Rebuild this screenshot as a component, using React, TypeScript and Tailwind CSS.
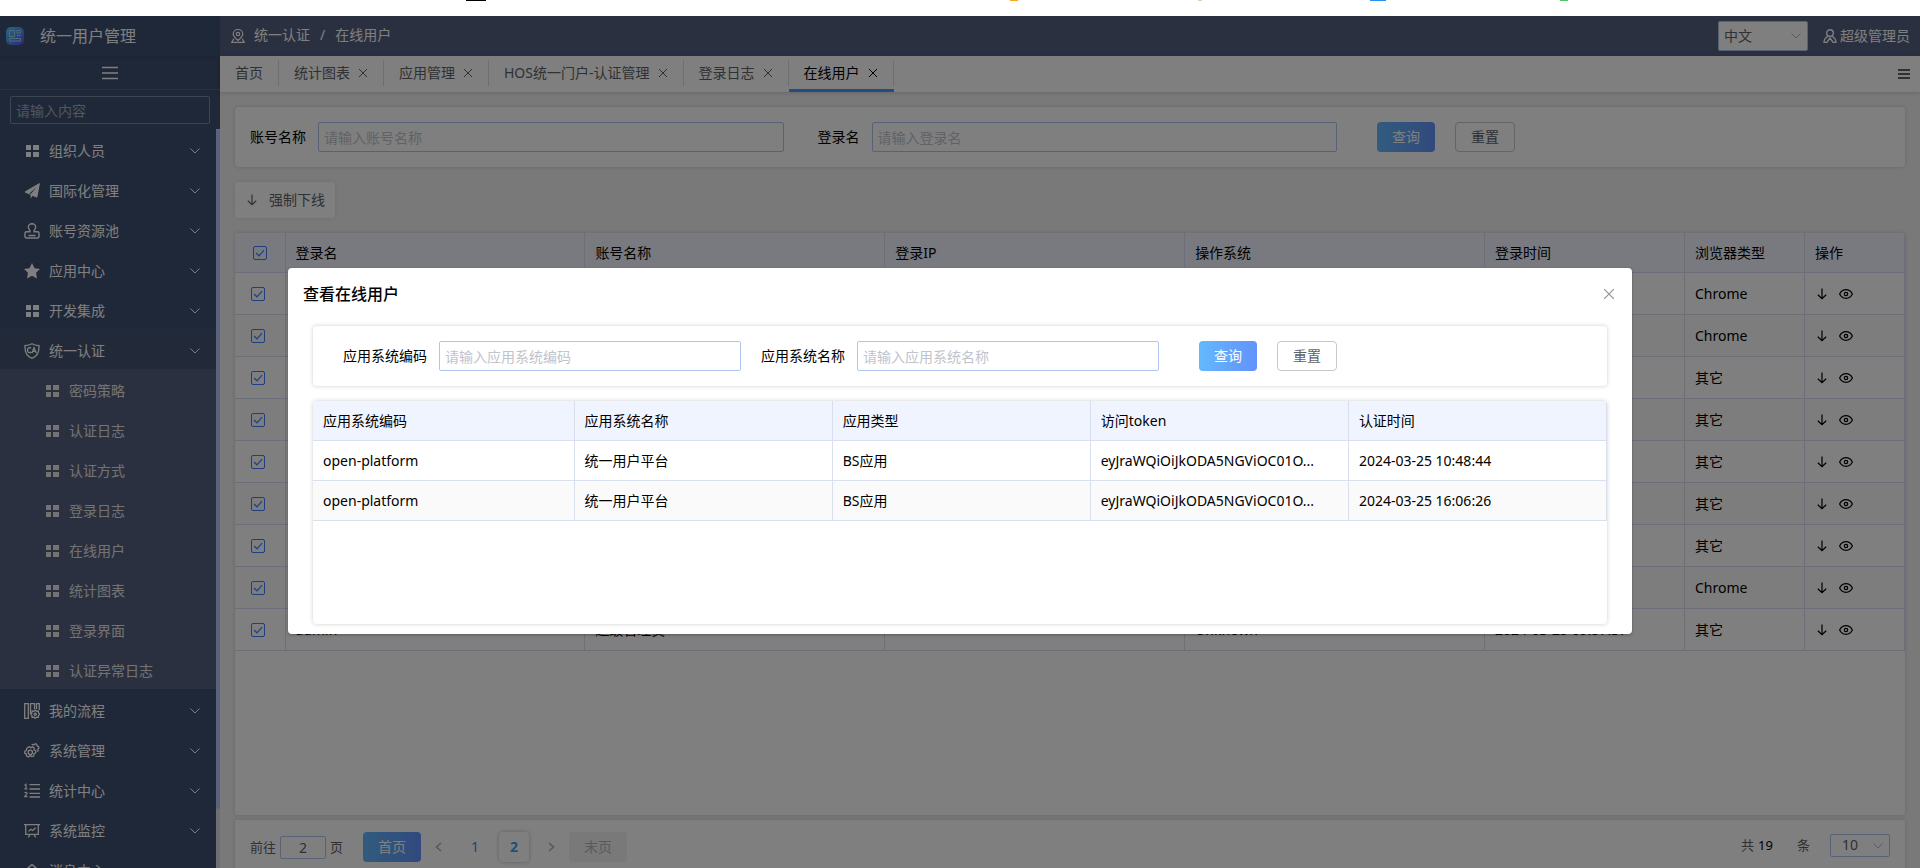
import { useState } from 'react';
import type { ReactNode } from 'react';

interface MenuItem {
  label: string;
  icon: ReactNode;
  children?: string[];
}

interface OnlineUser {
  login?: string;
  account?: string;
  ip?: string;
  os?: string;
  time: string;
  browser: string;
}

const GridIcon = () => (
  <svg width="16" height="16" viewBox="0 0 16 16" fill="currentColor" aria-hidden="true">
    <path d="M2 2h5v5H2zM9 2h6v5H9zM2 9h5v5H2zM9 9h6v5H9z" />
  </svg>
);

const PlaneIcon = () => (
  <svg width="16" height="16" viewBox="0 0 16 16" aria-hidden="true">
    <path d="M15.400.600 1 9l4.200 1.700L13 3.400 6.600 11.300v4.200l2.300-3 3.900 1.700z" fill="currentColor" />
    <path d="M1 9 15.400.600l-2.600 13.600-7.600-3.500z" fill="none" stroke="currentColor" strokeWidth="1" />
  </svg>
);

const StampIcon = () => (
  <svg width="16" height="16" viewBox="0 0 16 16" fill="none" stroke="currentColor" strokeWidth="1.4" aria-hidden="true">
    <path d="M6 8.800C6.200 7 4.300 6 4.300 4a3.700 3.300 0 0 1 7.400 0C11.700 6 9.800 7 10 8.800h3.500q1.500 0 1.500 1.500v3.200q0 1.500-1.500 1.500h-11Q1 15 1 13.500v-3.200q0-1.500 1.500-1.500zM4.500 12.500h7" />
  </svg>
);

const StarIcon = () => (
  <svg width="16" height="16" viewBox="0 0 16 16" fill="currentColor" aria-hidden="true">
    <path d="m8 0 2.500 5.200 5.500.7-4 3.900 1 5.700L8 12.800l-5 2.700 1-5.700-4-3.900 5.500-.7z" />
  </svg>
);

const ShieldIcon = () => (
  <svg width="16" height="16" viewBox="0 0 16 16" fill="none" stroke="currentColor" strokeWidth="1.3" aria-hidden="true">
    <path d="M8 .8c2 1.200 4.500 1.700 7 1.800C15.300 9 13 13.500 8 15.300 3 13.500.7 9 1 2.600 3.500 2.500 6 2 8 .8z" />
    <path d="M7.300 5.300C5.500 4 3.500 5 3.500 7.200s2 3.200 3.800 1.900M8 10l2-5.200L12.300 10M8.800 8.400h2.800" strokeWidth="1.3" />
  </svg>
);

const FlowIcon = () => (
  <svg width="16" height="16" viewBox="0 0 16 16" fill="none" stroke="currentColor" strokeWidth="1.3" aria-hidden="true">
    <path d="M.7.700h3.600v14.600H.7zM6.500 11V.700h4V6M12.500 6V.700h2.800V7" />
    <path d="m11.200 7 1.300 1.200 1.800-.2.300 1.900 1 1.200-1 1.300-.3 1.800-1.800-.1-1.300 1.200-1.300-1.200-1.800.1-.3-1.800-1-1.300 1-1.200.3-1.900 1.800.2z" />
    <circle cx="11.200" cy="11.200" r="1.100" />
  </svg>
);

const GearIcon = () => (
  <svg width="16" height="16" viewBox="0 0 16 16" fill="none" stroke="currentColor" strokeWidth="1.3" aria-hidden="true">
    <path d="m4.900 3.700 1.900 1 1.900-1 1.500 1.400-.1 1.700 1.800 1-.2 2-1.700.9-.2 2.300-2 .6-1.400-1.200-1.900 1.500-1.900-.8-.3-1.900-1.600-1.100.2-2 1.500-.8.400-2z" />
    <circle cx="6.300" cy="9.300" r="2.200" />
    <path d="m7.700 2 1-.6 1.300.3L11.500.8l1.300.7.200 1.400 1.800.9v1.500l-1 .9.400 1.500-1 .9" />
  </svg>
);

const ListIcon = () => (
  <svg width="16" height="16" viewBox="0 0 16 16" fill="none" stroke="currentColor" strokeWidth="1.3" aria-hidden="true">
    <path d="M5.500 1.700H16M5.500 6H16M5.500 10.300H16M5.500 14H16" />
    <path d="M.6 2.300 2 1.300v4.400M.4 5.900h3M.6 10c.6-1.100 2.600-.8 2.400.5C2.900 11.600 1 12.700.7 13.700h2.700" strokeWidth="1.2" />
  </svg>
);

const MonitorIcon = () => (
  <svg width="16" height="16" viewBox="0 0 16 16" fill="none" stroke="currentColor" strokeWidth="1.3" aria-hidden="true">
    <path d="M0 1.600h16M1.700 1.600v9.700h12.600V1.600M6.200 11.300 4.300 14.500M9.800 11.300l1.900 3.200M4.500 8.300l2.500-2 1.700 1.200 3-2.800" />
  </svg>
);

const HomeIcon = () => (
  <svg width="16" height="16" viewBox="0 0 16 16" fill="none" stroke="currentColor" strokeWidth="1.5" aria-hidden="true">
    <path d="M.7 8 8 1.500 15.300 8M3 6.500v8h10v-8" />
  </svg>
);

const Chevron = () => (
  <svg width="12" height="12" viewBox="0 0 12 12" fill="none" stroke="currentColor" aria-hidden="true">
    <path d="m1.500 3.500 4.500 4.500 4.500-4.500" />
  </svg>
);

const SideChevron = ({ right }: { right?: boolean }) => (
  <svg width="12" height="12" viewBox="0 0 12 12" fill="none" stroke="currentColor" strokeWidth="1.5" aria-hidden="true">
    <path d={right ? 'm4 2 4.500 4L4 10' : 'M8 2 3.500 6 8 10'} />
  </svg>
);

const CloseIcon = ({ size }: { size: number }) => (
  <svg width={size} height={size} viewBox="0 0 10 10" fill="none" stroke="currentColor" strokeWidth="1" aria-hidden="true">
    <path d="m1 1 8 8M9 1 1 9" />
  </svg>
);

const ArrowDown = () => (
  <svg width="12" height="12" viewBox="0 0 12 12" fill="none" stroke="currentColor" strokeWidth="1.2" aria-hidden="true">
    <path d="M6 .5v10M1.800 6.700 6 10.700l4.200-4" />
  </svg>
);

const EyeIcon = () => (
  <svg width="14" height="14" viewBox="0 0 14 14" fill="none" stroke="currentColor" strokeWidth="1.2" aria-hidden="true">
    <path d="M.6 7C2 4.200 4.300 2.700 7 2.700S12 4.200 13.400 7C12 9.800 9.700 11.300 7 11.300S2 9.800.6 7z" />
    <circle cx="7" cy="7" r="1.7" />
  </svg>
);

const menu: MenuItem[] = [
  { label: '组织人员', icon: <GridIcon /> },
  { label: '国际化管理', icon: <PlaneIcon /> },
  { label: '账号资源池', icon: <StampIcon /> },
  { label: '应用中心', icon: <StarIcon /> },
  { label: '开发集成', icon: <GridIcon /> },
  {
    label: '统一认证',
    icon: <ShieldIcon />,
    children: ['密码策略', '认证日志', '认证方式', '登录日志', '在线用户', '统计图表', '登录界面', '认证异常日志'],
  },
  { label: '我的流程', icon: <FlowIcon /> },
  { label: '系统管理', icon: <GearIcon /> },
  { label: '统计中心', icon: <ListIcon /> },
  { label: '系统监控', icon: <MonitorIcon /> },
  { label: '消息中心', icon: <HomeIcon /> },
];

const tabs = ['首页', '统计图表', '应用管理', 'HOS统一门户-认证管理', '登录日志', '在线用户'];

const users: OnlineUser[] = [
  { time: '2024-03-25 16:06:27', browser: 'Chrome' },
  { time: '2024-03-25 15:42:13', browser: 'Chrome' },
  { time: '2024-03-25 14:31:50', browser: '其它' },
  { time: '2024-03-25 14:12:04', browser: '其它' },
  { time: '2024-03-25 11:26:33', browser: '其它' },
  { time: '2024-03-25 11:08:45', browser: '其它' },
  { time: '2024-03-25 10:55:34', browser: '其它' },
  { time: '2024-03-25 10:48:46', browser: 'Chrome' },
  { login: 'admin', account: '超级管理员', os: 'Unknown', time: '2024-03-25 09:57:37', browser: '其它' },
];

const sessions = [
  { code: 'open-platform', name: '统一用户平台', type: 'BS应用', token: 'eyJraWQiOiJkODA5NGViOC01O...', time: '2024-03-25 10:48:44' },
  { code: 'open-platform', name: '统一用户平台', type: 'BS应用', token: 'eyJraWQiOiJkODA5NGViOC01O...', time: '2024-03-25 16:06:26' },
];

const Checkbox = ({ label }: { label: string }) => {
  const [checked, setChecked] = useState(true);
  return (
    <span className="relative block size-3.5">
      <input
        type="checkbox"
        aria-label={label}
        checked={checked}
        onChange={e => setChecked(e.target.checked)}
        className="block size-3.5 appearance-none rounded-xs border border-[#3d7eff]"
      />
      {checked && (
        <svg className="pointer-events-none absolute inset-0 text-[#3d7eff]" width="14" height="14" viewBox="0 0 14 14" fill="none" stroke="currentColor" strokeWidth="1.2" aria-hidden="true">
          <path d="m3 7 3 2.800 5-5.600" />
        </svg>
      )}
    </span>
  );
};

const PrimaryButton = ({ children }: { children: ReactNode }) => (
  <button type="button" className="h-[30px] w-[58px] shrink-0 rounded bg-linear-to-r from-[#63b8fc] to-[#6392fb] text-white">
    {children}
  </button>
);

const ResetButton = () => (
  <button type="button" className="h-[30px] w-[60px] shrink-0 rounded border border-[#c8c8c8] text-[#606266]">
    重置
  </button>
);

const Field = ({ id, label, placeholder }: { id: string; label: string; placeholder: string }) => (
  <div className="flex min-w-0 flex-auto items-center gap-3">
    <label htmlFor={id} className="shrink-0 text-black">{label}</label>
    <input
      id={id}
      type="text"
      placeholder={placeholder}
      className="h-[30px] w-0 min-w-0 flex-1 rounded-xs border border-[#b0c4ef] px-[5px] outline-none placeholder:text-[#c0c4cc]"
    />
  </div>
);

const Sidebar = () => (
  <aside className="flex w-[220px] shrink-0 flex-col overflow-hidden bg-[#3f5070] text-white">
    <div className="flex h-10 shrink-0 items-center gap-4 pl-1.5 text-base shadow-[0_1px_4px_rgba(0,0,0,0.15)]">
      <svg width="18" height="18" viewBox="0 0 18 18" aria-hidden="true">
        <defs>
          <linearGradient id="logo" x1="0" y1="0" x2="1" y2="1">
            <stop offset="0" stopColor="#4fd0f8" />
            <stop offset="1" stopColor="#5a52f0" />
          </linearGradient>
        </defs>
        <rect width="18" height="18" rx="5" fill="url(#logo)" />
        <path d="M3.500 3.500h5v6h-5zM11 3.500h3.500v2.500H11zM11 8.500h3.500M3.500 11.500h11v2.500h-11z" fill="none" stroke="#9fd8ff" />
      </svg>
      <span>统一用户管理</span>
    </div>
    <button type="button" aria-label="折叠菜单" className="flex h-[34px] shrink-0 items-center justify-center border-b border-[#566788]">
      <svg width="16" height="14" viewBox="0 0 16 14" stroke="currentColor" strokeWidth="1.4" aria-hidden="true">
        <path d="M0 1.500h16M0 7h16M0 12.500h16" />
      </svg>
    </button>
    <div className="shrink-0 px-2.5 pt-1.5 pb-[5px]">
      <input
        type="text"
        aria-label="搜索菜单"
        placeholder="请输入内容"
        className="h-7 w-full rounded-xs border border-[#7d8aa5] bg-transparent px-[5px] outline-none placeholder:text-[#a3abb9]"
      />
    </div>
    <div className="flex min-h-0 flex-1">
      <nav className="min-w-0 flex-1 overflow-hidden">
        {menu.map(item => (
          <div key={item.label}>
            <a href="#" className={`flex h-10 items-center pt-1 pl-6 pr-[15px] ${item.children ? 'bg-[#445474]' : ''}`}>
              {item.icon}
              <span className="ml-[9px] flex-1">{item.label}</span>
              <Chevron />
            </a>
            {item.children && (
              <div className="bg-[#55617e] text-[#e6e6e6]">
                {item.children.map(child => (
                  <a key={child} href="#" className="flex h-10 items-center gap-[9px] pt-1 pl-11">
                    <GridIcon />
                    <span>{child}</span>
                  </a>
                ))}
              </div>
            )}
          </div>
        ))}
      </nav>
      <div className="w-1 bg-[#dcdfe6]">
        <div className="h-[92%] rounded-full bg-[#b4c6fa]" />
      </div>
    </div>
  </aside>
);

const TopBar = () => (
  <header className="flex h-10 shrink-0 items-center bg-[#55617e] pl-[11px] pr-2.5 text-white">
    <svg width="14" height="14" viewBox="0 0 14 14" fill="none" stroke="currentColor" strokeWidth="1.2" aria-hidden="true">
      <path d="M7 11.500C3.800 8.800 2.200 7.200 2.200 5a4.800 4.500 0 0 1 9.600 0C11.800 7.200 10.200 8.800 7 11.500zM2.800 9.800.8 13.400h12.400l-2-3.600" />
      <circle cx="7" cy="5" r="1.700" />
    </svg>
    <nav className="ml-[9px] flex gap-2.5 pb-0.5">
      <a href="#">统一认证</a>
      <span>/</span>
      <span>在线用户</span>
    </nav>
    <div className="relative ml-auto">
      <select aria-label="语言" className="h-[30px] w-[90px] appearance-none rounded-xs border border-[#b0c4ef] bg-white px-[5px] text-[#606266]">
        <option>中文</option>
      </select>
      <span className="pointer-events-none absolute right-1.5 top-[9px] text-[#b0b8d0]"><Chevron /></span>
    </div>
    <button type="button" className="ml-[15px] flex items-center gap-[3px]">
      <svg width="14" height="14" viewBox="0 0 14 14" fill="none" stroke="currentColor" strokeWidth="1.4" aria-hidden="true">
        <circle cx="7" cy="4" r="3.300" />
        <path d="M5.300 7C2.800 8.300 1 10.500 1 13.500h2.800L7 9l3.200 4.500H13c0-3-1.800-5.200-4.300-6.500" />
      </svg>
      超级管理员
    </button>
  </header>
);

const TabBar = () => (
  <div className="flex h-9 shrink-0 items-stretch bg-white text-[#606266] shadow-[0_1px_4px_rgba(0,0,0,0.15)]">
    {tabs.map((tab, i) => {
      const active = i === tabs.length - 1;
      return (
        <div key={tab} className={`flex items-center border-b-3 ${active ? 'border-[#409eff] text-black' : 'border-transparent'}`}>
          <div className="flex h-[26px] items-center gap-2 border-r border-[#dcdcdc] px-[15px]">
            <a href="#">{tab}</a>
            {i > 0 && (
              <button type="button" aria-label={`关闭${tab}`}><CloseIcon size={10} /></button>
            )}
          </div>
        </div>
      );
    })}
    <button type="button" aria-label="标签菜单" className="ml-auto mr-2.5 text-[#606266]">
      <svg width="12" height="10" viewBox="0 0 12 10" stroke="currentColor" strokeWidth="2" aria-hidden="true">
        <path d="M0 1h12M0 5h12M0 9h12" />
      </svg>
    </button>
  </div>
);

const UserTable = () => (
  <div className="min-h-0 flex-1 overflow-hidden rounded-xs bg-white shadow-[0_0_4px_rgba(0,0,0,0.15)]">
    <table className="w-full table-fixed border-collapse text-left text-black">
      <colgroup>
        <col className="w-[50px]" />
        <col />
        <col />
        <col />
        <col />
        <col className="w-[200px]" />
        <col className="w-[120px]" />
        <col className="w-[100px]" />
      </colgroup>
      <thead>
        <tr className="h-[39px] border-b border-[#d8def0] bg-[#f0f4ff]">
          <th className="border-r border-[#d8def0] pt-0.5 pl-[18px]"><Checkbox label="全选" /></th>
          {['登录名', '账号名称', '登录IP', '操作系统', '登录时间', '浏览器类型', '操作'].map(head => (
            <th key={head} className="border-r border-[#d8def0] px-2.5 pt-0.5 font-normal">{head}</th>
          ))}
        </tr>
      </thead>
      <tbody>
        {users.map((user, i) => (
          <tr key={i} className="h-[42px] border-b border-[#d8def0] even:bg-[#fafafa]">
            <td className="border-r border-[#d8def0] pt-0.5 pl-4"><Checkbox label={`选择第${i + 1}行`} /></td>
            <td className="border-r border-[#d8def0] px-2.5 pt-0.5">{user.login}</td>
            <td className="border-r border-[#d8def0] px-2.5 pt-0.5">{user.account}</td>
            <td className="border-r border-[#d8def0] px-2.5 pt-0.5">{user.ip}</td>
            <td className="border-r border-[#d8def0] px-2.5 pt-0.5">{user.os}</td>
            <td className="border-r border-[#d8def0] px-2.5 pt-0.5">{user.time}</td>
            <td className="border-r border-[#d8def0] px-2.5 pt-0.5">{user.browser}</td>
            <td className="border-r border-[#d8def0] px-[11px] pt-0.5">
              <div className="flex items-center gap-[11px]">
                <button type="button" aria-label="强制下线"><ArrowDown /></button>
                <button type="button" aria-label="查看"><EyeIcon /></button>
              </div>
            </td>
          </tr>
        ))}
      </tbody>
    </table>
  </div>
);

const Pagination = () => (
  <div className="flex h-[54px] shrink-0 items-center rounded-xs bg-white px-[15px] text-[#606266] shadow-[0_0_4px_rgba(0,0,0,0.15)]">
    <label htmlFor="page" className="text-[13px]">前往</label>
    <input id="page" type="text" defaultValue="2" className="mx-1 h-[23px] w-[46px] rounded-xs border border-[#b0c4ef] text-center outline-none" />
    <span className="mr-5 text-[13px]">页</span>
    <PrimaryButton>首页</PrimaryButton>
    <button type="button" aria-label="上一页" className="flex w-9 justify-center text-[#a8aebf]"><SideChevron /></button>
    <button type="button" className="w-9 text-[#4080ff]">1</button>
    <button type="button" className="mx-1.5 h-[30px] w-[30px] rounded font-bold text-[#409eff] shadow-[0_0_4px_rgba(0,0,0,0.25)]">2</button>
    <button type="button" aria-label="下一页" className="flex w-8 justify-center text-[#a8aebf]"><SideChevron right /></button>
    <button type="button" className="ml-0.5 h-[30px] w-[58px] rounded bg-[#f2f2f2] text-[#b4b4b4]">末页</button>
    <div className="ml-auto flex items-center pb-1">
      <span className="text-[13px]">共</span>
      <span className="ml-1 mr-6 text-[13px] text-black">19</span>
      <span className="mr-5 text-[13px]">条</span>
      <div className="relative">
        <select aria-label="每页条数" className="block h-[23px] w-[60px] appearance-none rounded-xs border border-[#b0c4ef] bg-white pl-[11px] leading-5">
          <option>10</option>
        </select>
        <span className="pointer-events-none absolute right-1.5 top-1.5 text-[#b0b8d0]"><Chevron /></span>
      </div>
    </div>
  </div>
);

const SessionDialog = ({ onClose }: { onClose: () => void }) => (
  <div role="dialog" aria-label="查看在线用户" className="w-[70%] self-start rounded bg-white px-[25px] pb-2.5 text-black shadow-[0_1px_3px_rgba(0,0,0,0.3)]">
    <div className="-mx-2.5 flex h-[58px] items-center justify-between pb-1.5">
      <h2 className="text-base font-medium">查看在线用户</h2>
      <button type="button" aria-label="关闭" onClick={onClose} className="mr-0.5 text-[#909399]"><CloseIcon size={12} /></button>
    </div>
    <form className="flex h-[60px] items-center gap-5 rounded pl-[30px] shadow-[0_0_4px_rgba(0,0,0,0.2)]">
      <Field id="app-code" label="应用系统编码" placeholder="请输入应用系统编码" />
      <Field id="app-name" label="应用系统名称" placeholder="请输入应用系统名称" />
      <div className="flex w-[428px] shrink-0 gap-5 pl-5">
        <PrimaryButton>查询</PrimaryButton>
        <ResetButton />
      </div>
    </form>
    <div className="mt-[15px] h-[223px] overflow-hidden rounded shadow-[0_0_4px_rgba(0,0,0,0.2)]">
      <table className="w-full table-fixed border-collapse text-left">
        <colgroup>
          <col className="w-[261px]" />
          <col />
          <col />
          <col />
          <col />
        </colgroup>
        <thead>
          <tr className="h-[39px] border-b border-[#d8e0f0] bg-[#f0f4ff]">
            {['应用系统编码', '应用系统名称', '应用类型', '访问token', '认证时间'].map(head => (
              <th key={head} className="border-r border-[#d8e0f0] px-2.5 pt-0.5 font-normal">{head}</th>
            ))}
          </tr>
        </thead>
        <tbody>
          {sessions.map(s => (
            <tr key={s.time} className="h-10 border-b border-[#d8e0f0] even:bg-[#fafafa]">
              <td className="border-r border-[#d8e0f0] px-2.5 pt-0.5">{s.code}</td>
              <td className="border-r border-[#d8e0f0] px-2.5 pt-0.5">{s.name}</td>
              <td className="border-r border-[#d8e0f0] px-2.5 pt-0.5">{s.type}</td>
              <td className="border-r border-[#d8e0f0] px-2.5 pt-0.5 whitespace-nowrap">{s.token}</td>
              <td className="border-r border-[#d8e0f0] px-2.5 pt-0.5">{s.time}</td>
            </tr>
          ))}
        </tbody>
      </table>
    </div>
  </div>
);

const App = () => {
  const [open, setOpen] = useState(true);

  return (
    <div className="flex h-screen flex-col overflow-hidden bg-white font-['Noto_Sans','Noto_Sans_CJK_SC',sans-serif] text-sm">
      <div className="flex h-4 shrink-0">
        <span className="ml-[466px] h-px w-5 bg-black" />
        <span className="ml-[524px] h-px w-2 bg-[#f5a623]" />
        <span className="ml-[180px] h-px w-1 bg-[#e8c9a8]" />
        <span className="ml-[168px] h-px w-4 bg-[#2b8ff0]" />
        <span className="ml-[174px] h-px w-2 bg-[#4cc764]" />
      </div>
      <div className="relative flex min-h-0 flex-1">
        <Sidebar />
        <div className="flex min-w-0 flex-1 flex-col bg-[#f2f2f2]">
          <TopBar />
          <TabBar />
          <main className="-mb-1.5 flex min-h-0 flex-1 flex-col px-[15px] pt-[15px]">
            <form className="flex h-[60px] shrink-0 items-center gap-[34px] rounded bg-white pl-[15px] shadow-[0_0_4px_rgba(0,0,0,0.15)]">
              <Field id="account" label="账号名称" placeholder="请输入账号名称" />
              <Field id="login" label="登录名" placeholder="请输入登录名" />
              <div className="flex w-[534px] shrink-0 gap-5 pl-1.5">
                <PrimaryButton>查询</PrimaryButton>
                <ResetButton />
              </div>
            </form>
            <button type="button" className="my-[15px] flex h-9 w-[100px] shrink-0 items-center gap-[11px] rounded-xs bg-white pl-[11px] text-[#606266] shadow-[0_0_4px_rgba(0,0,0,0.1)]">
              <ArrowDown />
              强制下线
            </button>
            <UserTable />
            <div className="h-[5px] shrink-0" />
            <Pagination />
          </main>
        </div>
        {open && (
          <div className="absolute inset-0 flex justify-center bg-black/50 pt-[252px]">
            <SessionDialog onClose={() => setOpen(false)} />
          </div>
        )}
      </div>
    </div>
  );
};

export default App;
